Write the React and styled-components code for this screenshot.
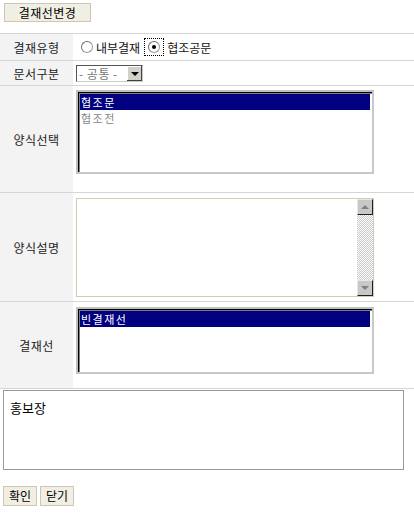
import styled, { createGlobalStyle } from 'styled-components';

const GlobalStyle = createGlobalStyle`
  body {
    margin: 0;
    background: #fff;
    font-family: "Noto Sans CJK KR", "DejaVu Sans", sans-serif;
    font-size: 12px;
    color: #000;
  }
`;

const Page = styled.div`
  width: 414px;
  padding-top: 3px;
`;

const TopButton = styled.button`
  margin-left: 4px;
  width: 87px;
  height: 19px;
  padding: 0;
  background: #f1efe4;
  border: 1px solid #cbc7b2;
  font: inherit;
  font-size: 12px;
  line-height: 15px;
  color: #000;
  letter-spacing: 0.5px;
`;

const Form = styled.div`
  margin-top: 11px;
  border-top: 1px solid #d6d6d6;
`;

const Row = styled.div`
  display: flex;
  height: ${({ $h }) => $h}px;
  border-bottom: 1px solid #d6d6d6;
`;

const Label = styled.div`
  width: 73px;
  flex: none;
  background: #f3f3f3;
  display: flex;
  align-items: center;
  justify-content: center;
  color: #222;
  letter-spacing: 0.5px;
`;

const Cell = styled.div`
  flex: 1;
  display: flex;
  align-items: ${({ $top }) => ($top ? 'flex-start' : 'center')};
  padding-left: 3px;
  padding-top: ${({ $pt }) => $pt || 0}px;
`;

const RadioGroup = styled.div`
  display: flex;
  align-items: center;
`;

const RadioOption = styled.label`
  display: flex;
  align-items: center;
  gap: 3px;
  color: #111;
`;

const RadioMark = styled.span`
  width: 12px;
  height: 12px;
  box-sizing: border-box;
  border-radius: 50%;
  border: 1px solid #9a9a9a;
  border-top-color: #6e6e6e;
  border-left-color: #6e6e6e;
  background: #fff;
  display: flex;
  align-items: center;
  justify-content: center;
  margin-left: ${({ $ml }) => $ml || 0}px;

  &::after {
    content: '';
    width: 4px;
    height: 4px;
    border-radius: 50%;
    background: ${({ $on }) => ($on ? '#000' : 'transparent')};
  }
`;

const FocusRing = styled.span`
  display: flex;
  align-items: center;
  justify-content: center;
  width: 20px;
  height: 18px;
  box-sizing: border-box;
  border: 1px dotted #000;
  margin-left: 4px;
`;

const Select = styled.div`
  display: flex;
  width: 67px;
  height: 17px;
  box-sizing: border-box;
  border: 1px solid #555;
  border-right-color: #ccc;
  border-bottom-color: #ccc;
  background: #fff;
  margin-top: 1px;
`;

const SelectText = styled.span`
  flex: 1;
  color: #777;
  line-height: 15px;
  padding-left: 2px;
  white-space: nowrap;
  letter-spacing: 0.5px;
`;

const SelectArrow = styled.span`
  width: 15px;
  flex: none;
  background: #d4d0c8;
  border-left: 1px solid #fff;
  box-shadow: inset -1px -1px #404040, inset 1px 1px #fff;
  display: flex;
  align-items: center;
  justify-content: center;

  &::after {
    content: '';
    border-left: 4px solid transparent;
    border-right: 4px solid transparent;
    border-top: 4px solid #000;
  }
`;

const ListBox = styled.div`
  width: 298px;
  height: ${({ $h }) => $h}px;
  box-sizing: border-box;
  border: 2px solid #c0c0c0;
  box-shadow: inset 1px 1px #000, inset 2px 2px #808080;
  border-right-color: #c8c8c8;
  border-bottom-color: #c8c8c8;
  background: #fff;
  padding: 2px 2px 0 2px;
`;

const ListItem = styled.div`
  height: 16px;
  line-height: 16px;
  overflow: hidden;
  padding-left: 1px;
  font-size: 11px;
  letter-spacing: 1.5px;
  background: ${({ $sel }) => ($sel ? '#000080' : 'transparent')};
  color: ${({ $sel, $dim }) => ($sel ? '#fff' : $dim ? '#888' : '#000')};
`;

const MemoBox = styled.div`
  display: flex;
  width: 298px;
  height: 99px;
  box-sizing: border-box;
  border: 1px solid #d1cdb8;
  background: #fff;
`;

const MemoArea = styled.textarea`
  flex: 1;
  border: none;
  outline: none;
  resize: none;
  background: transparent;
  font: inherit;
`;

const ScrollBar = styled.div`
  width: 16px;
  flex: none;
  display: flex;
  flex-direction: column;
  background: repeating-conic-gradient(#c8c8c8 0 25%, #fff 0 50%) 0 0 / 2px 2px;
`;

const ScrollButton = styled.div`
  height: 16px;
  box-sizing: border-box;
  background: #c8c8c8;
  border: 1px solid #e8e8e8;
  border-right-color: #202020;
  border-bottom-color: #202020;
  display: flex;
  align-items: center;
  justify-content: center;

  &::after {
    content: '';
    border-left: 4px solid transparent;
    border-right: 4px solid transparent;
    ${({ $down }) =>
      $down ? 'border-top: 4px solid #808080;' : 'border-bottom: 4px solid #808080;'}
  }
`;

const ScrollTrack = styled.div`
  flex: 1;
`;

const Opinion = styled.textarea`
  display: block;
  margin: 1px 0 0 3px;
  width: 401px;
  height: 80px;
  box-sizing: border-box;
  border: 1px solid #999;
  padding: 7px 6px;
  resize: none;
  font: inherit;
  font-size: 13px;
  color: #000;
  outline: none;
`;

const Actions = styled.div`
  display: flex;
  gap: 3px;
  margin: 16px 0 0 3px;
`;

const ActionButton = styled.button`
  width: 34px;
  height: 20px;
  padding: 0;
  background: #f1efe4;
  border: 1px solid #cbc7b2;
  font: inherit;
  font-size: 12px;
  line-height: 16px;
  color: #000;
`;

export default function App() {
  return (
    <Page>
      <GlobalStyle />
      <TopButton>결재선변경</TopButton>
      <Form>
        <Row $h={26}>
          <Label>결재유형</Label>
          <Cell>
            <RadioGroup>
              <RadioOption>
                <RadioMark $ml={5} />
                내부결재
              </RadioOption>
              <RadioOption>
                <FocusRing>
                  <RadioMark $on />
                </FocusRing>
                협조공문
              </RadioOption>
            </RadioGroup>
          </Cell>
        </Row>
        <Row $h={24}>
          <Label>문서구분</Label>
          <Cell>
            <Select>
              <SelectText>- 공통 -</SelectText>
              <SelectArrow />
            </Select>
          </Cell>
        </Row>
        <Row $h={106}>
          <Label>양식선택</Label>
          <Cell $top $pt={4}>
            <ListBox $h={84}>
              <ListItem $sel>협조문</ListItem>
              <ListItem $dim>협조전</ListItem>
            </ListBox>
          </Cell>
        </Row>
        <Row $h={108}>
          <Label>양식설명</Label>
          <Cell $top $pt={5}>
            <MemoBox>
              <MemoArea />
              <ScrollBar>
                <ScrollButton />
                <ScrollTrack />
                <ScrollButton $down />
              </ScrollBar>
            </MemoBox>
          </Cell>
        </Row>
        <Row $h={86}>
          <Label>결재선</Label>
          <Cell $top $pt={5}>
            <ListBox $h={67}>
              <ListItem $sel>빈결재선</ListItem>
            </ListBox>
          </Cell>
        </Row>
      </Form>
      <Opinion defaultValue="홍보장" />
      <Actions>
        <ActionButton>확인</ActionButton>
        <ActionButton>닫기</ActionButton>
      </Actions>
    </Page>
  );
}
